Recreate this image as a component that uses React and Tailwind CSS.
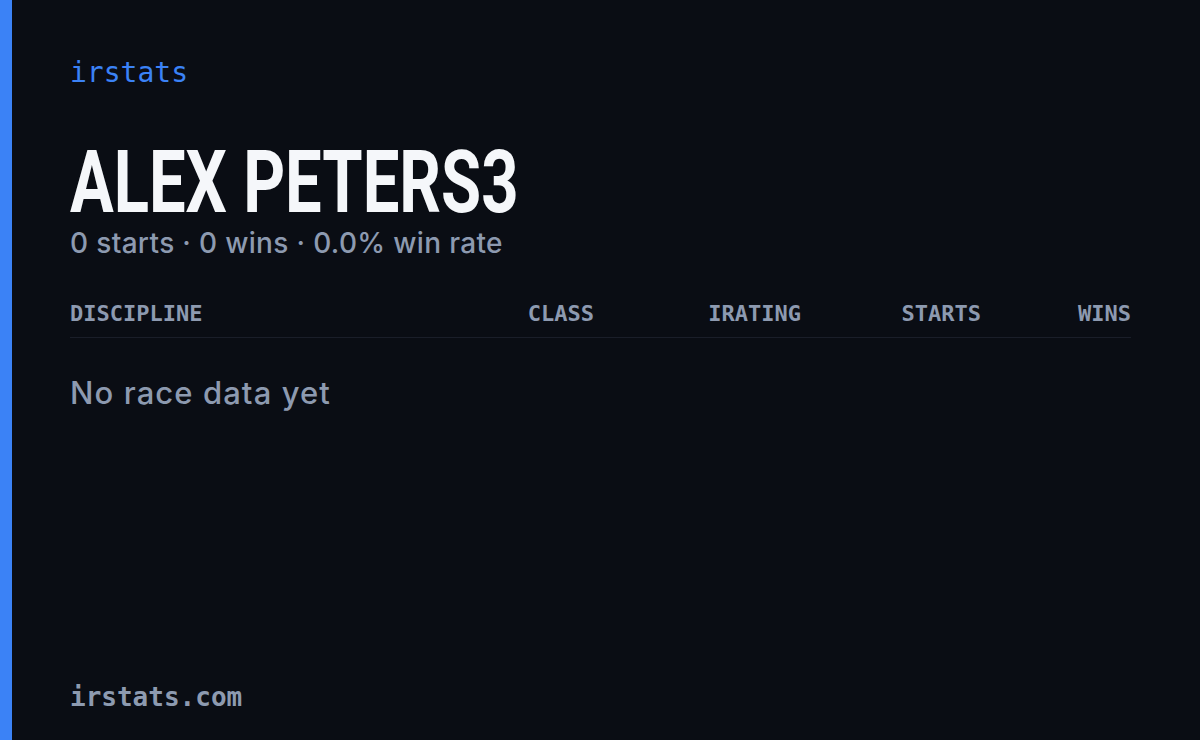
import React from 'react';

const MONO = "font-['DejaVu_Sans_Mono',monospace]";
const SANS = "font-['Inter','Noto_Sans',sans-serif]";

const columns = [
  { label: 'CLASS', width: 'w-[207px]' },
  { label: 'IRATING', width: 'w-[207px]' },
  { label: 'STARTS', width: 'w-[180px]' },
  { label: 'WINS', width: 'w-[150px]' },
];

const App = () => (
  <div className="flex h-[740px] w-[1200px] bg-[#0a0d14] overflow-hidden">
    <div className="w-3 shrink-0 bg-[#3b82f6]" />

    <main className="flex flex-1 flex-col pl-[58px] pr-[69px] pt-[59px] pb-[30px]">
      <div className={`${MONO} text-[28px] leading-none text-[#3b82f6]`}>irstats</div>

      <h1 className="mt-[57px] h-[76px] origin-left scale-x-[0.74] whitespace-nowrap font-['Roboto',sans-serif] text-[88px] font-bold leading-[76px] text-[#f5f7fa]">
        ALEX PETERS3
      </h1>
      <p className={`${SANS} mt-[9px] text-[28px] font-medium leading-none tracking-[0.012em] text-[#8d9ab0]`}>
        0 starts · 0 wins · 0.0% win rate
      </p>

      <div className={`${MONO} mt-[46px] flex border-b border-[#1a1e29] pb-[12px] text-[22px] font-bold leading-none text-[#8d9ab0]`}>
        <div className="flex-1">DISCIPLINE</div>
        {columns.map((c) => (
          <div key={c.label} className={`${c.width} text-right`}>{c.label}</div>
        ))}
      </div>

      <p className={`${SANS} mt-[39px] text-[31px] font-medium leading-none tracking-[0.035em] text-[#8d9ab0]`}>No race data yet</p>

      <div className={`${MONO} mt-auto text-[26px] font-bold leading-none text-[#8d9ab0]`}>irstats.com</div>
    </main>
  </div>
);

export default App;
